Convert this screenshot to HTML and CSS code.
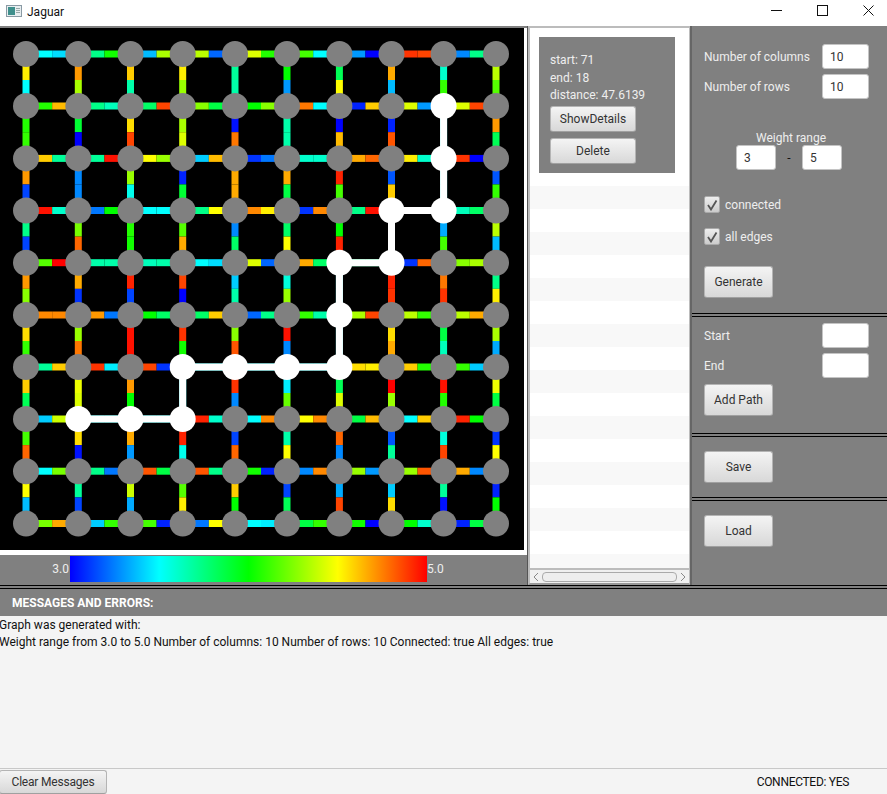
FILE: index.html
```html
<!DOCTYPE html>
<html lang="en">
<head>
  <meta charset="UTF-8">
  <title>Jaguar</title>
  <link rel="stylesheet" href="styles.css">
</head>
<body>
  <div class="titlebar">
    <svg class="app-icon" width="16" height="12" viewBox="0 0 16 12">
      <rect x="0.5" y="0.5" width="15" height="11" fill="#e8eef0" stroke="#8a9aa4"/>
      <rect x="2" y="2" width="7" height="8" fill="#3f8f8c"/>
      <rect x="10" y="3" width="4" height="1" fill="#9aa"/>
      <rect x="10" y="5" width="4" height="1" fill="#9aa"/>
      <rect x="10" y="7" width="4" height="1" fill="#9aa"/>
    </svg>
    <span class="app-title">Jaguar</span>
    <div class="win-controls">
      <svg width="11" height="11" viewBox="0 0 11 11"><path d="M0 5.5H11" stroke="#111" fill="none"/></svg>
      <svg width="11" height="11" viewBox="0 0 11 11"><rect x="0.5" y="0.5" width="10" height="10" stroke="#111" fill="none"/></svg>
      <svg width="11" height="11" viewBox="0 0 11 11"><path d="M0.5 0.5L10.5 10.5M10.5 0.5L0.5 10.5" stroke="#111" fill="none"/></svg>
    </div>
  </div>

  <div class="main">
    <div class="graph-col">
      <div class="graph-frame">
        <svg id="graph" width="524" height="522" viewBox="0 28 524 522"></svg>
      </div>
      <div class="legend">
        <span class="legend-min">3.0</span>
        <div class="legend-bar"></div>
        <span class="legend-max">5.0</span>
      </div>
    </div>

    <div class="path-list">
      <div class="path-items">
        <div class="path-card">
          <div class="path-line">start: 71</div>
          <div class="path-line">end: 18</div>
          <div class="path-line">distance: 47.6139</div>
          <button class="btn card-btn">ShowDetails</button>
          <button class="btn card-btn delete-btn">Delete</button>
        </div>
        <div class="stripes">
          <div></div><div></div><div></div><div></div><div></div><div></div><div></div><div></div>
          <div></div><div></div><div></div><div></div><div></div><div></div><div></div><div></div>
          <div></div>
        </div>
      </div>
      <div class="scrollbar">
        <svg width="6" height="10" viewBox="0 0 6 10"><path d="M5 1L1 5L5 9" stroke="#888" fill="none"/></svg>
        <div class="scroll-thumb"></div>
        <svg width="6" height="10" viewBox="0 0 6 10"><path d="M1 1L5 5L1 9" stroke="#888" fill="none"/></svg>
      </div>
    </div>

    <div class="side">
      <section class="side-sec gen-sec">
        <div class="field"><label>Number of columns</label><input class="num" value="10"></div>
        <div class="field"><label>Number of rows</label><input class="num" value="10"></div>
        <div class="weight-title">Weight range</div>
        <div class="weight-row">
          <input class="num small" value="3">
          <span class="dash">-</span>
          <input class="num small" value="5">
        </div>
        <div class="check-row">
          <span class="check"><svg width="12" height="12" viewBox="0 0 12 12"><path d="M2 6L5 10.5L10.5 1.5" stroke="#555" stroke-width="1.8" fill="none"/></svg></span>
          connected
        </div>
        <div class="check-row">
          <span class="check"><svg width="12" height="12" viewBox="0 0 12 12"><path d="M2 6L5 10.5L10.5 1.5" stroke="#555" stroke-width="1.8" fill="none"/></svg></span>
          all edges
        </div>
        <button class="btn side-btn">Generate</button>
      </section>
      <section class="side-sec path-sec">
        <div class="field"><label>Start</label><input class="num"></div>
        <div class="field"><label>End</label><input class="num"></div>
        <button class="btn side-btn add-btn">Add Path</button>
      </section>
      <section class="side-sec save-sec">
        <button class="btn side-btn">Save</button>
      </section>
      <section class="side-sec load-sec">
        <button class="btn side-btn">Load</button>
      </section>
    </div>
  </div>

  <div class="msg-head">MESSAGES AND ERRORS:</div>
  <div class="msg-body">
    <div>Graph was generated with:</div>
    <div>Weight range from 3.0 to 5.0 Number of columns: 10 Number of rows: 10 Connected: true All edges: true</div>
  </div>
  <div class="statusbar">
    <button class="btn clear-btn">Clear Messages</button>
    <span class="status">CONNECTED: YES</span>
  </div>

  <script src="graph.js"></script>
</body>
</html>
```

FILE: styles.css
```css
* {
  box-sizing: border-box;
}

body {
  margin: 0;
  height: 794px;
  overflow: hidden;
  font-family: Roboto, "Open Sans", sans-serif;
  font-size: 12px;
  background: #f4f4f4;
  color: #222;
  display: flex;
  flex-direction: column;
}

/* title bar */
.titlebar {
  height: 26px;
  background: #fff;
  display: flex;
  align-items: center;
  padding-left: 6px;
  flex: none;
}

.app-icon {
  margin-bottom: 4px;
}

.app-title {
  margin-left: 5px;
  margin-bottom: 3px;
  color: #111;
}

.win-controls {
  margin-left: auto;
  margin-right: 13px;
  margin-bottom: 6px;
  display: flex;
  gap: 35px;
}

/* top area */
.main {
  height: 559px;
  flex: none;
  display: flex;
  background: #808080;
}

.graph-col {
  width: 527px;
  flex: none;
  border-top: 2px solid #808080;
}

.graph-frame {
  height: 527px;
  width: 527px;
  border-right: 3px solid #fff;
  border-bottom: 5px solid #fff;
  background: #000;
}

.graph-frame svg {
  display: block;
}

.legend {
  display: flex;
  align-items: center;
  height: 26px;
  margin-top: 1px;
  color: #eee;
}

.legend-min {
  width: 70px;
  text-align: right;
  padding-right: 1px;
}

.legend-bar {
  width: 357px;
  height: 26px;
  background: linear-gradient(to right, #00f, #0ff, #0f0, #ff0, #f00);
}

/* saved paths list */
.path-list {
  width: 165px;
  flex: none;
  background: #fff;
  border-left: 1px solid #555;
  border-right: 2px solid #666;
  display: flex;
  flex-direction: column;
}

.path-items {
  flex: 1;
  border: 2px solid #bcbcbc;
  border-bottom: none;
  border-right-width: 1px;
  padding: 9px 0 0 9px;
  background: #fff;
  overflow: hidden;
}

.path-card {
  width: 136px;
  height: 136px;
  background: #808080;
  padding: 15px 0 0 11px;
  color: #eee;
}

.path-line {
  height: 17.5px;
  line-height: 17.5px;
}

.card-btn {
  display: block;
  width: 86px;
  height: 26px;
  margin-top: 1px;
}

.delete-btn {
  margin-top: 6px;
}

.stripes {
  margin: 13px 0 0 -9px;
}

.stripes div {
  height: 23px;
}

.stripes div:nth-child(odd) {
  background: #f8f8f8;
}

.scrollbar {
  height: 17px;
  flex: none;
  background: #f0f0f0;
  border: 2px solid #bcbcbc;
  border-bottom-color: #999;
  border-right-width: 1px;
  display: flex;
  align-items: center;
  justify-content: space-between;
  padding: 0 3px;
}

.scroll-thumb {
  width: 135px;
  height: 10px;
  border: 1px solid #aaa;
  border-radius: 4px;
  background: #eee;
}

/* controls column */
.side {
  flex: 1;
  display: flex;
  flex-direction: column;
  background: #808080;
  color: #eee;
}

.side-sec {
  padding: 0 18px 0 12px;
  border-bottom: 4px double #000;
}

.gen-sec {
  height: 291px;
  padding-top: 18px;
}

.path-sec {
  height: 120px;
  padding-top: 6px;
}

.save-sec {
  height: 64px;
  padding-top: 14px;
}

.load-sec {
  border-bottom: none;
  padding-top: 14px;
}

.field {
  display: flex;
  justify-content: space-between;
  align-items: center;
  height: 25px;
  margin-bottom: 5px;
}

.num {
  width: 47px;
  height: 25px;
  border: 1px solid #c4c4c4;
  border-radius: 3px;
  padding: 0 7px;
  font: inherit;
  color: #333;
  background: #fff;
}

.weight-title {
  margin: 30px 0 0 9px;
  text-align: center;
  height: 16px;
  line-height: 18px;
}

.weight-row {
  display: flex;
  justify-content: center;
  align-items: center;
  margin-left: 5px;
  color: #111;
}

.num.small {
  width: 40px;
}

.dash {
  width: 26px;
  text-align: center;
}

.check-row {
  display: flex;
  align-items: center;
  gap: 5px;
  height: 17px;
  margin-top: 15px;
}

.weight-row + .check-row {
  margin-top: 26px;
}

.check {
  width: 16px;
  height: 17px;
  border: 1px solid #aaa;
  border-radius: 2px;
  background: linear-gradient(#eee, #ccc);
  display: flex;
  align-items: center;
  justify-content: center;
}

.btn {
  font: inherit;
  color: #333;
  padding: 0;
  border: 1px solid #b4b4b4;
  border-bottom-color: #a0a0a0;
  border-radius: 3px;
  background: linear-gradient(#f4f4f4, #d8d8d8);
}

.side-btn {
  width: 69px;
  height: 32px;
}

.gen-sec .side-btn {
  margin-top: 21px;
}

.add-btn {
  margin-top: 1px;
}

/* messages */
.msg-head {
  height: 31px;
  flex: none;
  background: #808080;
  border-top: 4px double #000;
  padding: 4px 0 0 12px;
  color: #fff;
  font-weight: 700;
  line-height: 20px;
}

.msg-body {
  height: 153px;
  flex: none;
  margin-left: -1px;
  padding-top: 1px;
  line-height: 17px;
  color: #111;
  border-bottom: 1px solid #c8c8c8;
}

.statusbar {
  flex: 1;
  display: flex;
  align-items: center;
  padding-top: 1px;
  margin-left: -1px;
}

.clear-btn {
  width: 108px;
  height: 24px;
  letter-spacing: -0.2px;
}

.status {
  margin-left: auto;
  margin-right: 38px;
  letter-spacing: -0.3px;
  color: #111;
}
```

FILE: graph.js
```js
// edge colours, two per edge (one for each half)
const rowEdges = [
  "0ff 0df 0f8 1f0 0bf af0 bf0 06f df0 2f0 4f0 0ff 09f 00f f30 f40 08f 0f8",
  "2f0 fb0 0f8 0fb 0f6 f40 8f0 0f4 0f0 8f0 f70 0ff 02f fc0 df0 09f df0 f40",
  "fc0 0f9 0f9 f10 ff0 9f0 0cf fb0 03f 07f 0fc 0fc fa0 f60 fe0 0fc f30 00f",
  "f10 0fc 07f 0f0 0ff 0ff 0f8 ff0 f80 fe0 03f f80 0f8 f10 0ff 0ff 0fb 0f6",
  "5f0 f00 0fa 0fa 0fb 0fa 0ff 0df df0 06f fa0 0f6 0f8 0f8 03f f60 8f0 af0",
  "f80 f80 f90 07f 0f0 0f6 0f6 fc0 06f 0f8 3f0 0fa af0 f40 bf0 3f0 bf0 fa0",
  "0f9 fc0 f30 0ef f40 03f 0ff 0ff 0ff 0ff 0ff 0ff fd0 fe0 fc0 2f0 3f0 0cf",
  "0cf cf0 0ff 0ff 0ff 0ff f20 0fc 0ff f80 ff0 f80 0f4 fb0 0ff fc0 f20 0f0",
  "0ff 7f0 0f8 07f f50 0f4 f50 0f8 1f0 02f 08f f80 9f0 09f 9f0 f50 fa0 08f",
  "7f0 fa0 0cf 3f0 4f0 02f 07f ff0 0ff 0ef 0f4 3f0 1f0 00f 0f0 0fc 02f 0f4"
];

const colEdges = [
  "fe0 0ff f90 af0 fc0 0fa fe0 9f0 0f9 0fa 0f0 09f 0f5 ff0 fa0 0bf 0fc 3f0 bf0 5f0",
  "2f0 3f0 0f3 00f fd0 f40 af0 df0 01f f70 0fa 0fa 00f fb0 02f f50 0ff 0ff f90 0f5",
  "f90 04f 08f 08f 9f0 0fe 02f 0f3 fa0 fa0 fa0 0f4 f20 4f0 05f fc0 0ff 0ff 05f 3f0",
  "0f8 04f 7f0 f60 2f0 1f0 5f0 fa0 08f 0f6 0f6 ff0 0f0 f20 0ff 0ff 0af 4f0 bf0 0bf",
  "f90 8f0 fa0 03f f20 04f f40 00f 0cf 0fa 0fd 9f0 0ff 0ff f20 f30 f70 f30 0f8 fe0",
  "fd0 3f0 9f0 f70 f10 f10 f30 1f0 8f0 f50 f10 08f 0ff 0ff fd0 fa0 0f4 0fb af0 0af",
  "fc0 0f5 ef0 df0 f90 0f0 0ff 0ff f30 08f 0ef 6f0 0f5 df0 f00 9f0 f10 2f0 ef0 0f4",
  "4f0 f60 fd0 01f fa0 09f f20 0fe 04f f60 0fa ff0 f60 08f 05f 0f9 0fd f40 03f ff0",
  "ff0 0bf 0f9 04f cf0 0af 5f0 fe0 fc0 0f0 04f 0f5 0af f40 0cf fd0 0f9 01f 02f 0f0"
];

// the highlighted path, as [row, col] pairs
const pathNodes = [
  [7, 1], [7, 2], [7, 3], [6, 3], [6, 4], [6, 5], [6, 6],
  [5, 6], [4, 6], [4, 7], [3, 7], [3, 8], [2, 8], [1, 8]
];

const xs = [26, 78.3, 130.5, 182.7, 235, 287, 339.4, 391.5, 443.6, 496];
const ys = [54, 106, 158.4, 210.5, 262.7, 315, 367, 419, 471.2, 523.5];

const NS = "http://www.w3.org/2000/svg";
const svg = document.getElementById("graph");

function line(x1, y1, x2, y2, color, width) {
  const el = document.createElementNS(NS, "line");
  el.setAttribute("x1", x1);
  el.setAttribute("y1", y1);
  el.setAttribute("x2", x2);
  el.setAttribute("y2", y2);
  el.setAttribute("stroke", color);
  el.setAttribute("stroke-width", width);
  svg.appendChild(el);
}

function halves(x1, y1, x2, y2, c1, c2) {
  const mx = (x1 + x2) / 2;
  const my = (y1 + y2) / 2;
  line(x1, y1, mx, my, "#" + c1, 7);
  line(mx, my, x2, y2, "#" + c2, 7);
}

rowEdges.forEach(function (data, r) {
  const c = data.split(" ");
  for (let i = 0; i < 9; i++) {
    halves(xs[i], ys[r], xs[i + 1], ys[r], c[i * 2], c[i * 2 + 1]);
  }
});

colEdges.forEach(function (data, r) {
  const c = data.split(" ");
  for (let i = 0; i < 10; i++) {
    halves(xs[i], ys[r], xs[i], ys[r + 1], c[i * 2], c[i * 2 + 1]);
  }
});

for (let i = 0; i < pathNodes.length - 1; i++) {
  const a = pathNodes[i];
  const b = pathNodes[i + 1];
  line(xs[a[1]], ys[a[0]], xs[b[1]], ys[b[0]], "#fff", 7);
}

ys.forEach(function (y, r) {
  xs.forEach(function (x, c) {
    const onPath = pathNodes.some(function (p) { return p[0] === r && p[1] === c; });
    const el = document.createElementNS(NS, "circle");
    el.setAttribute("cx", x);
    el.setAttribute("cy", y);
    el.setAttribute("r", 13);
    el.setAttribute("fill", onPath ? "#fff" : "#808080");
    svg.appendChild(el);
  });
});
```
